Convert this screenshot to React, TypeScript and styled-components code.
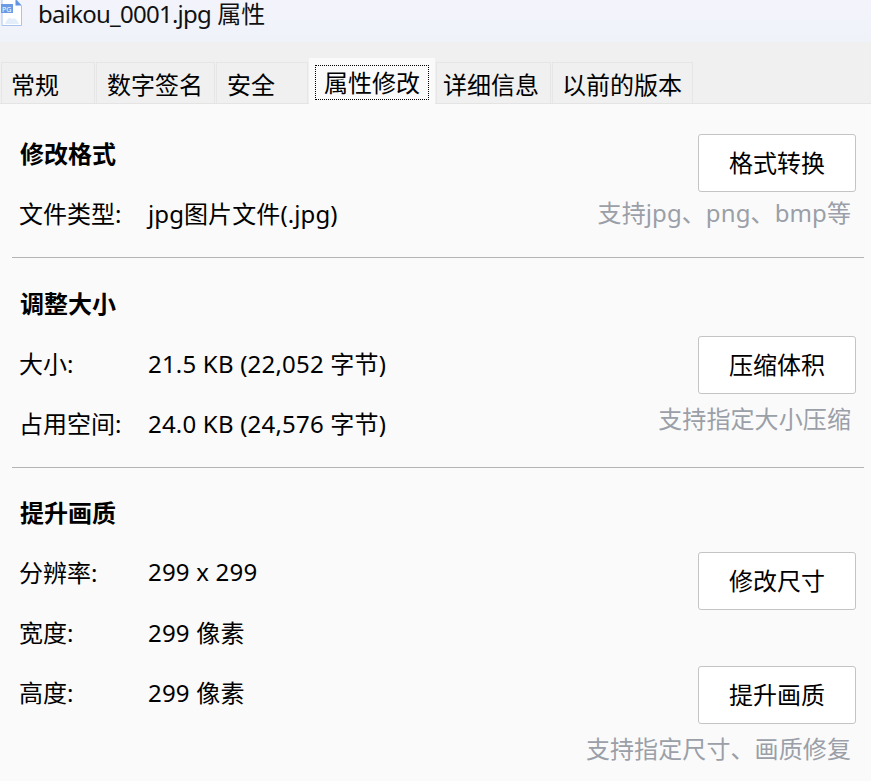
import React from "react";
import styled, { createGlobalStyle } from "styled-components";

const GlobalStyle = createGlobalStyle`
    html, body {
        margin: 0;
        padding: 0;
        background: #fafafa;
    }

    body {
        font-family: "Noto Sans", "Noto Sans CJK SC", sans-serif;
        color: #000;
    }
`;

const Window = styled.div`
    width: 871px;
    height: 781px;
    overflow: hidden;
    display: flex;
    flex-direction: column;
    background: #fafafa;
`;

const TitleBar = styled.div`
    height: 42px;
    flex: none;
    display: flex;
    align-items: flex-start;
    gap: 15px;
    background: linear-gradient(#f3f4fb, #f0f2fa);
`;

const TitleText = styled.div`
    font-size: 24px;
    line-height: 28px;
    color: #111;
`;

const TitleName = styled.span`
    letter-spacing: -0.75px;
`;

const FileIcon = styled.svg`
    width: 23px;
    height: 27px;
    flex: none;
`;

const TabStrip = styled.div`
    height: 62px;
    flex: none;
    box-sizing: border-box;
    display: flex;
    align-items: flex-end;
    padding-left: 1px;
    gap: 1px;
    background: #f0f0f0;
    border-bottom: 1px solid #e4e4e4;
`;

const Tab = styled.div<{ $width: number; $inset?: number; $active?: boolean }>`
    box-sizing: border-box;
    width: ${p => p.$width}px;
    height: ${p => (p.$active ? 46 : 41)}px;
    margin-bottom: ${p => (p.$active ? -1 : 0)}px;
    padding: ${p => (p.$active ? "6px 5px 3px" : `0 0 0 ${p.$inset ?? 9}px`)};
    display: flex;
    align-items: center;
    font-size: 24px;
    background: ${p => (p.$active ? "#fafafa" : "#f0f0f0")};
    border: 1px solid ${p => (p.$active ? "#fafafa" : "#e6e6e6")};
    border-bottom: ${p => (p.$active ? "1px solid #fafafa" : "none")};
`;

const TabFocus = styled.div`
    flex: 1;
    height: 100%;
    box-sizing: border-box;
    display: flex;
    align-items: center;
    justify-content: center;
    padding-bottom: 2px;
    border: 1px dotted #000;
`;

const Section = styled.section<{ $top: number; $height: number; $ruled?: boolean }>`
    box-sizing: border-box;
    height: ${p => p.$height}px;
    margin: 0 7px 0 12px;
    padding: ${p => p.$top}px 8px 0 8px;
    display: flex;
    justify-content: space-between;
    border-bottom: ${p => (p.$ruled ? "1px solid #b4b4b4" : "none")};
`;

const Info = styled.div`
    display: flex;
    flex-direction: column;
`;

const Heading = styled.h2`
    margin: 0;
    height: 60px;
    box-sizing: border-box;
    padding-bottom: 4px;
    display: flex;
    align-items: center;
    font-size: 24px;
    font-weight: 700;
`;

const Row = styled.div`
    height: 60px;
    box-sizing: border-box;
    padding-bottom: 4px;
    display: flex;
    align-items: center;
    font-size: 24px;
`;

const Label = styled.span`
    width: 129px;
    margin-left: -1px;
    flex: none;
`;

const Value = styled.span<{ $spacing?: number }>`
    letter-spacing: ${p => p.$spacing ?? 0.2}px;
`;

const Actions = styled.div<{ $top: number }>`
    display: flex;
    flex-direction: column;
    align-items: flex-end;
    padding-top: ${p => p.$top}px;
`;

const ActionButton = styled.button<{ $below?: number }>`
    box-sizing: border-box;
    width: 158px;
    height: 58px;
    margin-bottom: ${p => p.$below ?? 0}px;
    padding: 0 0 3px;
    font: inherit;
    font-size: 24px;
    color: #000;
    background: #fff;
    border: 1px solid #c4c4c4;
    border-radius: 3px;
`;

const Hint = styled.div<{ $top: number }>`
    margin-top: ${p => p.$top}px;
    padding-right: 5px;
    font-size: 24px;
    line-height: 34px;
    letter-spacing: 0.1px;
    color: #9a9fa8;
    white-space: nowrap;
`;

export default function App() {
    return (
        <Window>
            <GlobalStyle />
            <TitleBar>
                <FileIcon viewBox="0 0 23 27">
                    <path d="M2 -1H15.500L21.500 5.500V25.500H2Z" fill="#fff" stroke="#a9c4ee" strokeWidth="1" />
                    <path d="M15.500 -1V5.500H21.500Z" fill="#5f93e4" />
                    <rect x="1" y="4" width="12" height="9" fill="#6c9be6" />
                    <text x="2" y="11.500" fontSize="7" fill="#fff">PG</text>
                    <path d="M5 24C7 18 10 17 12 19C14 17 17 19 19 24Z" fill="#e4eefb" />
                </FileIcon>
                <TitleText><TitleName>baikou_0001.jpg</TitleName> 属性</TitleText>
            </TitleBar>
            <TabStrip>
                <Tab $width={94}>常规</Tab>
                <Tab $width={119} $inset={10}>数字签名</Tab>
                <Tab $width={92} $inset={10}>安全</Tab>
                <Tab $width={126} $active>
                    <TabFocus>属性修改</TabFocus>
                </Tab>
                <Tab $width={115} $inset={6}>详细信息</Tab>
                <Tab $width={141} $inset={9}>以前的版本</Tab>
            </TabStrip>
            <Section $top={20} $height={154} $ruled>
                <Info>
                    <Heading>修改格式</Heading>
                    <Row><Label>文件类型:</Label><Value $spacing={0.1}>jpg图片文件(.jpg)</Value></Row>
                </Info>
                <Actions $top={10}>
                    <ActionButton>格式转换</ActionButton>
                    <Hint $top={4}>支持jpg、png、bmp等</Hint>
                </Actions>
            </Section>
            <Section $top={16} $height={210} $ruled>
                <Info>
                    <Heading>调整大小</Heading>
                    <Row><Label>大小:</Label><Value>21.5 KB (22,052 字节)</Value></Row>
                    <Row><Label>占用空间:</Label><Value>24.0 KB (24,576 字节)</Value></Row>
                </Info>
                <Actions $top={62}>
                    <ActionButton>压缩体积</ActionButton>
                    <Hint $top={8}>支持指定大小压缩</Hint>
                </Actions>
            </Section>
            <Section $top={15} $height={313}>
                <Info>
                    <Heading>提升画质</Heading>
                    <Row><Label>分辨率:</Label><Value>299 x 299</Value></Row>
                    <Row><Label>宽度:</Label><Value>299 像素</Value></Row>
                    <Row><Label>高度:</Label><Value>299 像素</Value></Row>
                </Info>
                <Actions $top={69}>
                    <ActionButton $below={56}>修改尺寸</ActionButton>
                    <ActionButton>提升画质</ActionButton>
                    <Hint $top={8}>支持指定尺寸、画质修复</Hint>
                </Actions>
            </Section>
        </Window>
    );
}
